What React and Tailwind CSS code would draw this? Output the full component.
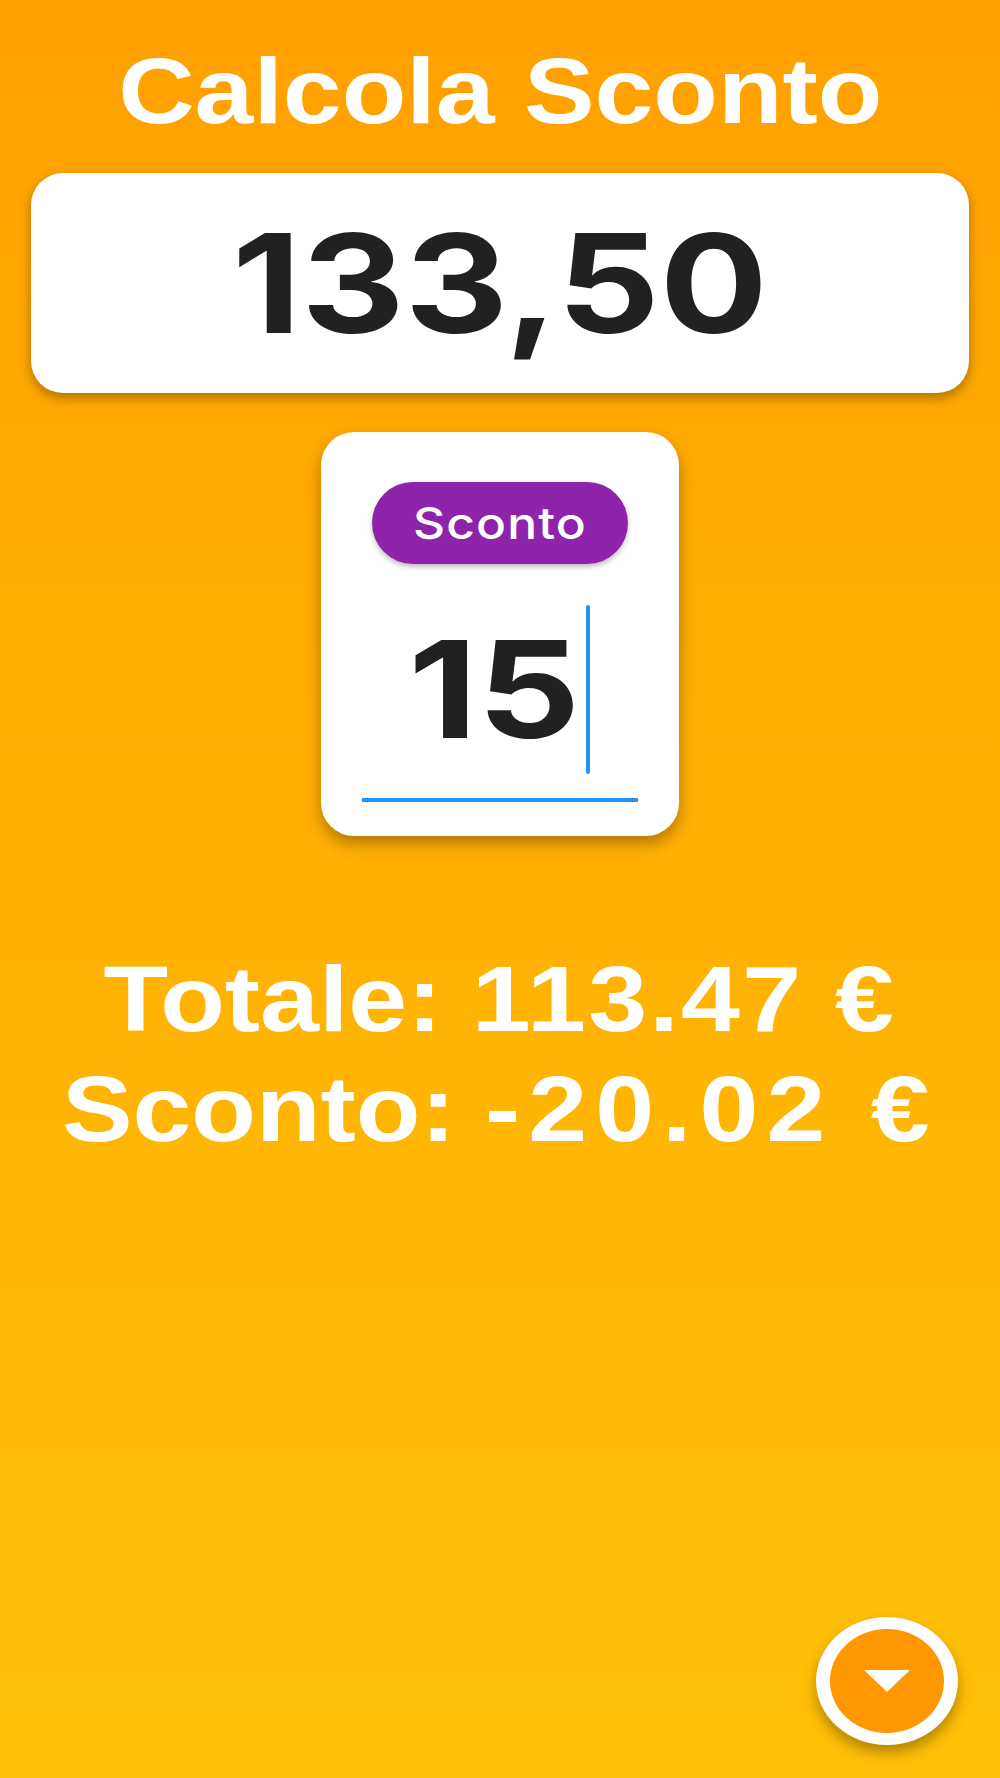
import { useState } from "react";

function App() {
  const [importo] = useState("133,50");
  const [sconto] = useState("15");

  const prezzo = parseFloat(importo.replace(",", "."));
  const risparmio = (prezzo * parseFloat(sconto)) / 100;
  const totale = prezzo - risparmio;

  return (
    <div className="relative min-h-screen w-full bg-gradient-to-b from-[#ffa000] to-[#ffc107] flex flex-col items-center overflow-hidden">
      {/* Titolo */}
      <h1 className="mt-[45px] text-[92px] leading-none font-bold text-white font-['Liberation_Sans',Arial,sans-serif] scale-x-[1.15]">
        Calcola Sconto
      </h1>

      {/* Importo */}
      <div className="mt-[36px] w-[938px] h-[220px] bg-white rounded-[32px] shadow-[0_5px_12px_rgba(0,0,0,0.32)] flex items-center justify-center">
        <span className="text-[137px] leading-none font-bold text-[#212121] font-['Inter',sans-serif] scale-x-[1.17]">
          {importo}
        </span>
      </div>

      {/* Percentuale */}
      <div className="mt-[39px] w-[358px] bg-white rounded-[33px] shadow-[0_8px_16px_rgba(0,0,0,0.3)] flex flex-col items-center pt-[50px] pb-[34px]">
        <div className="w-[256px] h-[82px] rounded-full bg-[#8e24aa] shadow-[0_3px_5px_rgba(0,0,0,0.25)] flex items-center justify-center">
          <span className="text-[44px] leading-none font-medium text-white font-['Inter',sans-serif] tracking-[1px] scale-x-[1.13]">
            Sconto
          </span>
        </div>
        <div className="mt-[41px] h-[169px] pl-[12px] flex items-center justify-center gap-[20px]">
          <span className="text-[135px] leading-none font-bold text-[#212121] font-['Inter',sans-serif] scale-x-[1.19]">
            {sconto}
          </span>
          <span className="w-[4px] h-[169px] rounded-full bg-[#2196f3]" />
        </div>
        <div className="mt-[24px] w-[276px] h-[4px] bg-[#2196f3]" />
      </div>

      {/* Risultato */}
      <div className="mt-[108px] text-center text-white font-bold text-[92px] leading-[110px] font-['Liberation_Sans',Arial,sans-serif] scale-x-[1.15]">
        <p>
          Totale: <span className="tracking-[2px]">{totale.toFixed(2)} €</span>
        </p>
        <p>
          Sconto: <span className="tracking-[7px]">-{risparmio.toFixed(2)} €</span>
        </p>
      </div>

      {/* Pulsante */}
      <button className="absolute right-[42px] bottom-[33px] w-[142px] h-[128px] rounded-[50%] border-x-[14px] border-y-[12px] border-white bg-[#ff9800] shadow-[0_8px_14px_rgba(0,0,0,0.3)] flex items-center justify-center">
        <svg width="46" height="22" viewBox="0 0 46 22">
          <path d="M0 0 H46 L23 22 Z" fill="#ffffff" />
        </svg>
      </button>
    </div>
  );
}

export default App;
